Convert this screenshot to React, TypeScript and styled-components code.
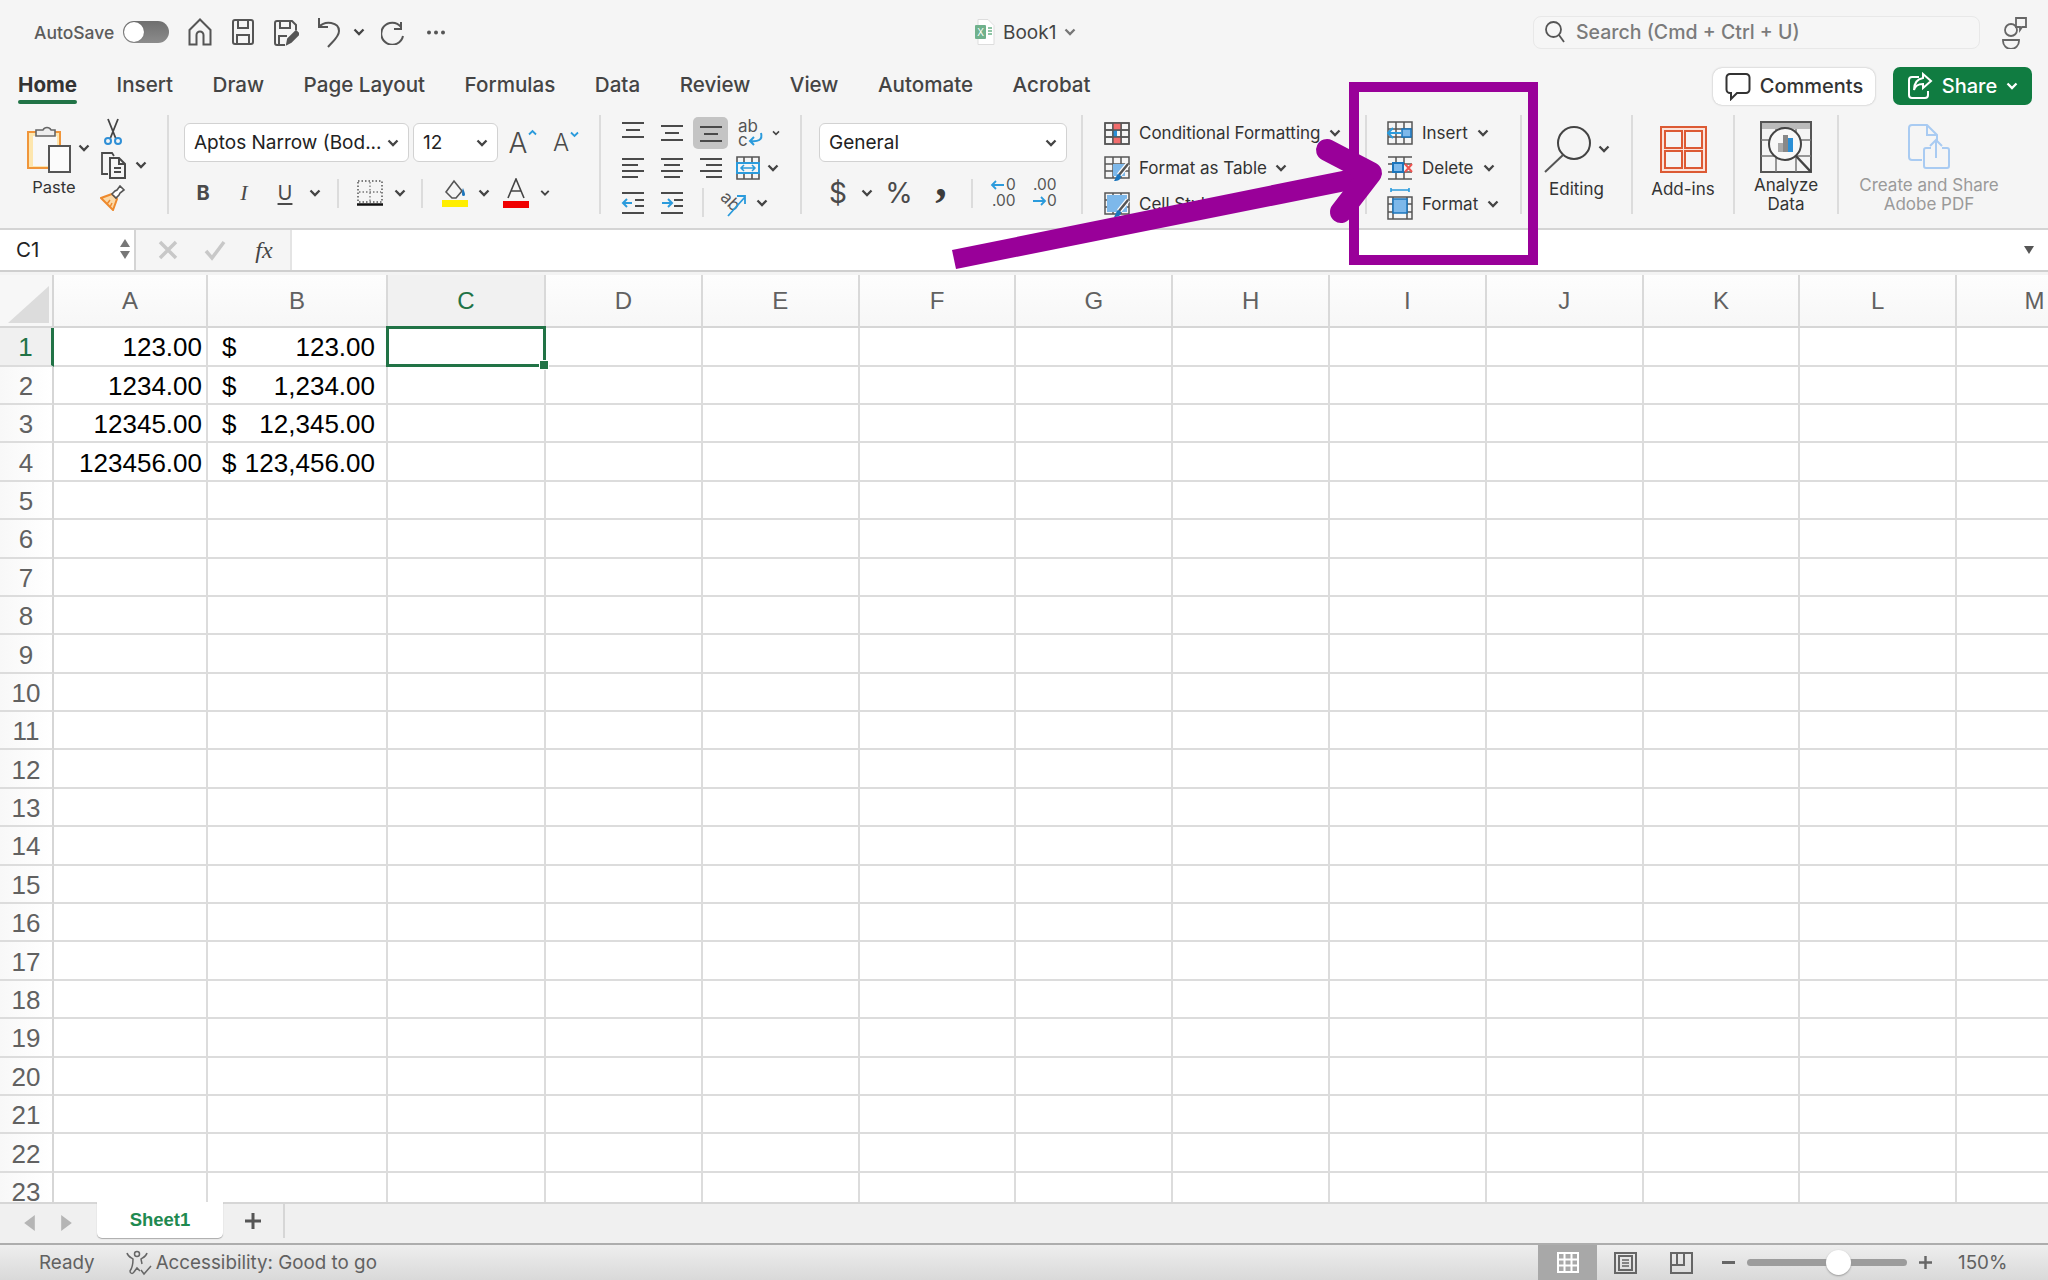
import React from "react";
import styled, { createGlobalStyle } from "styled-components";

const Global = createGlobalStyle`
  html, body { margin: 0; padding: 0; background: #f5f5f5; }
  * { box-sizing: border-box; }
`;

const UI = `Inter, "Liberation Sans", sans-serif`;
const SHEET = `"Liberation Sans", Arial, sans-serif`;
const INK = "#4a4a4a";
const GREEN = "#217346";

const Page = styled.div`
  position: relative; width: 2048px; height: 1280px; overflow: hidden;
  display: flex; flex-direction: column; background: #f5f5f5; font-family: ${UI}; color: #333;
`;

/* ---------- title bar ---------- */
const TitleBar = styled.header`
  height: 64px; flex: none; display: flex; align-items: center;
`;
const QuickAccess = styled.div`
  width: 975px; flex: none; padding-left: 34px; display: flex; align-items: center;
`;
const AutoSave = styled.span`
  width: 81px; font-size: 17.5px; font-weight: 500; color: #5c5c5c; white-space: nowrap;
`;
const Toggle = styled.span`
  position: relative; width: 46px; height: 22px; margin: 0 8px; border-radius: 11px; flex: none;
  background: linear-gradient(#6f6f6f, #8c8c8c);
  &::before {
    content: ""; position: absolute; left: 1px; top: 1px; width: 20px; height: 20px;
    border-radius: 50%; background: #fff; box-shadow: 0 0 1px #555;
  }
`;
const Slot = styled.span<{ $w: number }>`
  width: ${p => p.$w}px; flex: none; display: flex; align-items: center; justify-content: center;
`;
const DocName = styled.div`
  width: 120px; flex: none; display: flex; align-items: center; gap: 8px;
  font-size: 19px; color: #444;
`;
const SearchBox = styled.div`
  margin-left: 438px; width: 447px; height: 33px; flex: none; display: flex; align-items: center;
  padding-left: 11px; gap: 11px; border: 1px solid #e8e8e8; border-radius: 8px; background: #f6f6f6;
  font-size: 19.5px; font-weight: 500; color: #7b7b7b;
`;
const PeopleSlot = styled.span`
  margin-left: 22px; display: flex;
`;

/* ---------- tabs ---------- */
const TabRow = styled.nav`
  height: 46px; flex: none; display: flex; align-items: flex-start; padding: 0 16px 0 18px;
`;
const TabList = styled.div`
  display: flex; gap: 39.5px; height: 40px; align-items: center;
`;
const Tab = styled.span<{ $on?: boolean }>`
  position: relative; font-size: 20.6px; white-space: nowrap;
  font-weight: ${p => (p.$on ? 700 : 500)}; color: ${p => (p.$on ? "#333" : "#444")};
  &::after {
    content: ""; display: ${p => (p.$on ? "block" : "none")}; position: absolute;
    left: 0; right: 0; bottom: -7px; height: 4px; border-radius: 2px; background: ${GREEN};
  }
`;
const TabActions = styled.div`
  margin-left: auto; display: flex; gap: 18px; align-items: center; padding-top: 3px;
`;
const CommentsBtn = styled.span`
  width: 162px; height: 37px; display: flex; align-items: center; justify-content: center; gap: 9px;
  background: #fff; border-radius: 9px; box-shadow: 0 0 2px #aaa;
  font-size: 20px; font-weight: 500; color: #333;
`;
const ShareBtn = styled.span`
  width: 139px; height: 38px; display: flex; align-items: center; justify-content: center; gap: 9px;
  background: #107c41; border-radius: 7px; color: #fff; font-size: 20px; font-weight: 500;
`;

/* ---------- ribbon ---------- */
const Ribbon = styled.section`
  height: 118px; flex: none; display: flex; padding-top: 5px; align-items: flex-start;
`;
const Group = styled.div<{ $w: number; $pad?: number; $end?: boolean }>`
  width: ${p => p.$w}px; height: 99px; flex: none; padding-left: ${p => p.$pad || 0}px;
  border-right: ${p => (p.$end ? "0" : "2px solid #dcdcdc")};
`;
const RowGroup = styled(Group)`
  display: flex;
`;
const PasteCol = styled.div`
  width: 80px; flex: none; display: flex; flex-direction: column; padding-top: 3px;
`;
const PasteIcons = styled.div`
  height: 60px; padding-left: 13px; display: flex; gap: 7px; align-items: center;
`;
const PasteLabel = styled.span`
  text-align: center; font-size: 16.5px; line-height: 19px; color: #333;
`;
const Stack = styled.div`
  display: flex; flex-direction: column;
`;
const SlotRow = styled.div`
  height: 35px; display: flex; align-items: center;
`;
const FieldsCol = styled.div`
  padding-top: 8px; display: flex; flex-direction: column; gap: 11px;
`;
const FieldRow = styled.div`
  display: flex; align-items: center; gap: 4px; height: 39px;
`;
const Select = styled.div<{ $w: number }>`
  width: ${p => p.$w}px; height: 39px; flex: none; display: flex; align-items: center;
  justify-content: space-between; padding: 0 9px; background: #fff;
  border: 1.5px solid #d2d2d2; border-radius: 6px; font-size: 19px; color: #222; white-space: nowrap;
`;
const ToolRow = styled.div`
  display: flex; align-items: center; height: 40px;
`;
const ToolGlyph = styled.span<{ $bold?: boolean; $italic?: boolean; $under?: boolean; $size?: number }>`
  font-family: ${p => (p.$italic ? `"Liberation Serif", serif` : UI)};
  font-size: ${p => p.$size || 20}px; color: ${INK}; line-height: 1;
  font-weight: ${p => (p.$bold ? 700 : 400)};
  font-style: ${p => (p.$italic ? "italic" : "normal")};
  text-decoration: ${p => (p.$under ? "underline" : "none")};
  text-underline-offset: 3px;
`;
const GrowGlyph = styled(ToolGlyph)`
  display: flex; align-items: flex-start; font-weight: 300; gap: 1px;
`;
const CommaGlyph = styled.span`
  font-family: "Liberation Serif", serif; font-weight: 700; font-size: 46px; line-height: 1;
  color: #3c3c3c; transform: translateY(-12px);
`;
const Rule = styled.span`
  width: 2px; height: 29px; background: #dcdcdc;
`;
const ActiveTile = styled.span`
  width: 35px; height: 32px; display: flex; align-items: center; justify-content: center;
  border-radius: 5px; background: #c4c4c4;
`;
const CmdRow = styled.div`
  height: 35.5px; display: flex; align-items: center; font-size: 17px; color: #333; white-space: nowrap;
`;
const CmdIcon = styled.span`
  width: 26px; margin-right: 9px; display: flex; justify-content: center; flex: none;
`;
const CmdChev = styled.span<{ $gap: number }>`
  margin-left: ${p => p.$gap}px; display: flex;
`;
const Big = styled(Group)`
  display: flex; flex-direction: column; align-items: center; padding-top: 3px;
`;
const BigIcon = styled.div`
  height: 62px; display: flex; align-items: center; gap: 7px;
`;
const BigLabel = styled.span<{ $muted?: boolean }>`
  font-size: 17px; line-height: 19px; text-align: center; white-space: nowrap;
  color: ${p => (p.$muted ? "#9a9a9a" : "#333")};
`;

/* ---------- formula bar ---------- */
const FormulaBar = styled.div`
  height: 44px; flex: none; display: flex; border-top: 2px solid #d4d4d4; border-bottom: 2px solid #cfcfcf;
`;
const NameBox = styled.div`
  width: 136px; flex: none; background: #fff; border-right: 2px solid #d4d4d4; display: flex;
  align-items: center; justify-content: space-between; padding: 0 4px 2px 16px;
  font-size: 20.5px; color: #222;
`;
const Spin = styled.span`
  display: flex; flex-direction: column; gap: 4px;
`;
const FormulaTools = styled.div`
  width: 154px; flex: none; display: flex; align-items: center; padding-left: 12px;
`;
const FxText = styled.span`
  font-family: "Liberation Serif", serif; font-style: italic; font-size: 24px; color: #444;
`;
const FormulaInput = styled.div`
  flex: 1; background: #fff; border-left: 2px solid #e4e4e4; display: flex; justify-content: flex-end;
  align-items: center; padding-right: 14px;
`;
const Gap = styled.div`
  height: 3px; flex: none; background: #f3f3f3;
`;

/* ---------- sheet ---------- */
const SheetArea = styled.main`
  flex: 1; min-height: 0; overflow: hidden; background: #fff;
  display: grid; align-content: start;
  grid-template-columns: 54px 154px 180px 158px repeat(10, 156.8px);
  grid-template-rows: 53.2px repeat(23, 38.4px);
  font-family: ${SHEET};
`;
const Corner = styled.div`
  position: relative; background: #f7f7f7; border-right: 2px solid #d6d6d6; border-bottom: 2px solid #d6d6d6;
  &::after {
    content: ""; position: absolute; right: 3px; bottom: 3px; width: 0; height: 0;
    border-style: solid; border-width: 0 0 37px 41px; border-color: transparent transparent #dcdcdc transparent;
  }
`;
const ColHead = styled.div<{ $on?: boolean }>`
  display: flex; align-items: center; justify-content: center; font-size: 24px;
  color: ${p => (p.$on ? GREEN : "#616161")};
  background: ${p => (p.$on ? "#f1f1f1" : "linear-gradient(#fdfdfd, #f7f7f7)")};
  border-right: 2px solid #d9d9d9; border-bottom: 2px solid #d6d6d6;
`;
const RowHead = styled.div<{ $on?: boolean }>`
  display: flex; align-items: center; justify-content: center; font-size: 26px; padding-top: 3px;
  color: ${p => (p.$on ? GREEN : "#616161")};
  background: ${p => (p.$on ? "#f0f0f0" : "linear-gradient(90deg, #f8f8f8, #fff)")};
  border-right: ${p => (p.$on ? `3px solid ${GREEN}` : "2px solid #d6d6d6")};
  border-bottom: 2px solid #dcdcdc;
`;
const Cell = styled.div`
  position: relative; display: flex; align-items: center; justify-content: flex-end;
  gap: 4px; padding: 3px 4px 0 4px; font-size: 26px; color: #000; white-space: nowrap;
  border-right: 2px solid #dcdcdc; border-bottom: 2px solid #dcdcdc;
`;
const Accounting = styled(Cell)`
  justify-content: space-between; padding: 3px 11px 0 14px;
`;
const Selection = styled.span`
  position: absolute; z-index: 2; left: -2px; right: -2px; top: -2px; bottom: -2px; border: 3px solid ${GREEN};
  &::after {
    content: ""; position: absolute; right: -5px; bottom: -5px; width: 8px; height: 8px;
    background: ${GREEN}; box-shadow: 0 0 0 1px #fff;
  }
`;

/* ---------- sheet tabs + status ---------- */
const SheetTabs = styled.div`
  height: 41px; flex: none; display: flex; align-items: flex-start;
  border-top: 2px solid #d6d6d6; background: #f0f0f0;
`;
const NavArrows = styled.div`
  width: 97px; height: 37px; flex: none; display: flex; align-items: center; padding-left: 23px; gap: 24px;
`;
const SheetTab = styled.div`
  width: 126px; height: 36px; margin-top: -2px; flex: none; display: flex; align-items: center; justify-content: center;
  background: #fff; border-radius: 0 0 5px 5px; box-shadow: 0 1px 1px #aaa;
  font-family: ${SHEET}; font-size: 18.5px; font-weight: 700; color: #1f8a50;
`;
const AddTab = styled.div`
  width: 62px; height: 34px; flex: none; display: flex; align-items: center; justify-content: center;
  border-right: 2px solid #d6d6d6;
`;
const StatusBar = styled.footer`
  height: 37px; flex: none; display: flex; align-items: center; padding-left: 39px;
  border-top: 2px solid #adadad; background: linear-gradient(#eeeeee, #d9d9d9);
  font-family: ${UI}; font-size: 18.8px; color: #616161;
`;
const StatusText = styled.span`
  white-space: nowrap;
`;
const AccessSlot = styled.span`
  margin: 0 4px 0 31px; display: flex;
`;
const ViewActive = styled.span`
  margin-left: auto; width: 59px; height: 35px; flex: none; display: flex; align-items: center; justify-content: center;
  background: #a8a8a8;
`;
const ZoomTrack = styled.span`
  position: relative; width: 160px; height: 7px; border-radius: 4px; background: #9c9c9c; flex: none;
  &::after {
    content: ""; position: absolute; left: 79px; top: -9px; width: 25px; height: 25px; border-radius: 50%;
    background: #fff; box-shadow: 0 1px 2px #999;
  }
`;
const ZoomPct = styled.span`
  width: 105px; padding-left: 15px; flex: none;
`;

/* ---------- annotation ---------- */
const MarkBox = styled.div`
  position: absolute; left: 1349px; top: 82px; width: 189px; height: 183px; border: 10px solid #990099;
`;
const MarkArrow = styled.svg`
  position: absolute; left: 0; top: 0; pointer-events: none;
`;

/* ---------- icons ---------- */
type S = { children: React.ReactNode; w: number; h: number };
const Svg = ({ children, w, h }: S) => (
  <svg width={w} height={h} viewBox={`0 0 ${w} ${h}`} fill="none" stroke={INK} strokeWidth={1.8}>
    {children}
  </svg>
);
const Chev = ({ c = "#444", w = 12 }: { c?: string; w?: number }) => (
  <svg width={w} height={8} viewBox="0 0 12 8" fill="none" stroke={c} strokeWidth={2.3}>
    <path d="M1.5 1.5 6 6l4.5-4.5" />
  </svg>
);
const Caret = ({ up }: { up?: boolean }) => (
  <svg width={9} height={7} viewBox="0 0 9 7" fill="none" stroke="#2b9bdc" strokeWidth={1.8}>
    <path d={up ? "M1 5.500 4.500 2 8 5.500" : "M1 1.500 4.500 5 8 1.500"} />
  </svg>
);
const Home = () => (
  <Svg w={24} h={28}>
    <path d="M1.5 12 12 1.5 22.500 12v14.500h-7V17a3.500 3.500 0 0 0-7 0v9.500h-7z" strokeWidth={2} stroke="#555" />
  </Svg>
);
const Save = () => (
  <Svg w={24} h={28}>
    <path d="M4 2h16a2 2 0 0 1 2 2v20a2 2 0 0 1-2 2H4a2 2 0 0 1-2-2V4a2 2 0 0 1 2-2zM7 2v8h10V2M6 26v-9h12v9" strokeWidth={2} stroke="#555" />
  </Svg>
);
const SaveAs = () => (
  <Svg w={26} h={29}>
    <path d="M12 27H4a2 2 0 0 1-2-2V5a2 2 0 0 1 2-2h15l4 4v5M7 3v7h10V3M6 27v-9h8" strokeWidth={2} stroke="#555" />
    <path d="m14 26 1-5 8-8 3 3-8 8z" fill="#555" stroke="#555" />
  </Svg>
);
const Undo = () => (
  <Svg w={24} h={34}>
    <path d="M2 3v9h9M2 12c6-7 20-5 20 4 0 6-6 10-11 16" strokeWidth={2} stroke="#555" />
  </Svg>
);
const Redo = () => (
  <Svg w={24} h={26}>
    <path d="M20 3v7h-7M20 8A11 11 0 1 0 22 17" strokeWidth={2} stroke="#555" />
  </Svg>
);
const Dots = () => (
  <svg width={20} height={5}><g fill="#555"><circle cx="3" cy="2.500" r="2" /><circle cx="10" cy="2.500" r="2" /><circle cx="17" cy="2.500" r="2" /></g></svg>
);
const XlDoc = () => (
  <svg width={20} height={26} viewBox="0 0 20 26">
    <path d="M3 .5h10l6 6v19H3z" fill="#fff" stroke="#ddd" />
    <rect x="0" y="6" width="11" height="14" rx="1" fill="#6fb18c" />
    <text x="5.500" y="16.500" fontSize="10" textAnchor="middle" fill="#fff" fontFamily={SHEET}>X</text>
    <path d="M13 9h4M13 12h4M13 15h4" stroke="#8fc5a5" strokeWidth="2" />
  </svg>
);
const SearchIcon = () => (
  <Svg w={20} h={22}>
    <circle cx="8.500" cy="8.500" r="7.500" stroke="#555" />
    <path d="m14 14 5 7" stroke="#555" />
  </Svg>
);
const People = () => (
  <Svg w={26} h={34}>
    <circle cx="9" cy="15" r="6" stroke="#666" />
    <path d="M1 25h16v1a8 8 0 0 1-16 0zM14 3h10v9h-4l-2 3v-3h-4z" stroke="#666" />
  </Svg>
);
const Bubble = () => (
  <Svg w={26} h={29}>
    <path d="M5 2h16a3.500 3.500 0 0 1 3.500 3.500v12A3.500 3.500 0 0 1 21 21H12l-6 6v-6H5a3.500 3.500 0 0 1-3.500-3.500v-12A3.500 3.500 0 0 1 5 2z" stroke="#333" strokeWidth={2} />
  </Svg>
);
const ShareIcon = () => (
  <Svg w={26} h={28}>
    <path d="M12 5H5a3 3 0 0 0-3 3v15a3 3 0 0 0 3 3h13a3 3 0 0 0 3-3v-4" stroke="#fff" strokeWidth={2} />
    <path d="M16 2l8 7-8 7v-4c-5 0-8 2-9 6 0-7 3-11 9-12z" stroke="#fff" strokeWidth={2} />
  </Svg>
);
const PasteIcon = () => (
  <svg width={44} height={49} viewBox="0 0 44 49" fill="none">
    <rect x="1" y="8" width="32" height="36" fill="#fde6ae" stroke="#f0953a" strokeWidth="2" />
    <rect x="6" y="12" width="24" height="30" fill="#f8f8f8" />
    <path d="M9 12V6h7a4.500 4.500 0 0 1 8 0h4v6z" fill="#eee" stroke="#666" strokeWidth="1.600" />
    <rect x="22" y="22" width="21" height="26" fill="#fbfbfb" stroke="#555" strokeWidth="2" />
  </svg>
);
const Scissors = () => (
  <svg width={18} height={28} viewBox="0 0 18 28" fill="none">
    <path d="M4 1l8 20M14 1 6 21" stroke="#444" strokeWidth="1.800" />
    <circle cx="4" cy="23" r="3" stroke="#2f8fd6" strokeWidth="2" />
    <circle cx="14" cy="23" r="3" stroke="#2f8fd6" strokeWidth="2" />
  </svg>
);
const CopyIcon = () => (
  <Svg w={26} h={28}>
    <path d="M8 23H2V2h10l2 3" strokeWidth={1.800} />
    <path d="M10 7h9l6 6v14H10zM19 7v6h6M14 17h7M14 21h7" strokeWidth={2} />
  </Svg>
);
const Brush = () => (
  <svg width={26} height={26} viewBox="0 0 26 26" fill="none">
    <path d="M1 13l11-4 5 5-4 11z" fill="#fbd9a8" stroke="#ee8a2e" strokeWidth="2" />
    <path d="M7 19l3-4M10 22l2-4" stroke="#ee8a2e" strokeWidth="1.500" />
    <path d="M12 9l3-3 2-1 3-4 4 4-4 3-1 2-3 3z" fill="#fff" stroke="#555" strokeWidth="1.600" />
  </svg>
);
const Borders = () => (
  <svg width={26} height={26} viewBox="0 0 26 26" fill="none">
    <rect x="1" y="1" width="24" height="21" stroke="#555" strokeWidth="1.500" strokeDasharray="1.500 2" />
    <path d="M13 2v20M2 12h22" stroke="#777" strokeWidth="1.300" strokeDasharray="1.500 2" />
    <path d="M0 24.500h26" stroke="#111" strokeWidth="2.500" />
  </svg>
);
const Fill = () => (
  <svg width={26} height={28} viewBox="0 0 26 28" fill="none">
    <path d="M4 13 12 2l8 10-6 7h-4z" stroke="#555" strokeWidth="1.600" />
    <path d="M21 9c1 3 2 5 2 6.500a1.500 1.500 0 0 1-3 0c0-1.500 0-4 1-6.500z" fill="#1b75bc" />
    <rect y="21" width="26" height="7" fill="#ffee00" />
  </svg>
);
const FontColor = () => (
  <svg width={26} height={30} viewBox="0 0 26 30" fill="none">
    <path d="M5 20 13 1l8 19M8 13h10" stroke="#444" strokeWidth="1.600" />
    <rect y="23" width="26" height="7" fill="#f00000" />
  </svg>
);
const Lines = ({ rows }: { rows: [number, number, number][] }) => (
  <Svg w={24} h={26}>
    {rows.map(([a, b, y], i) => <path key={i} d={`M${a} ${y}H${b}`} strokeWidth={2} />)}
  </Svg>
);
const Indent = ({ flip }: { flip?: boolean }) => (
  <Svg w={24} h={26}>
    <path d="M1 3h22M14 10h9M14 16h9M1 23h22" strokeWidth={2} />
    {flip
      ? <path d="M2 13h9M8 9l4 4-4 4" stroke="#2b9bdc" strokeWidth={2} />
      : <path d="M11 13H2M6 9l-4 4 4 4" stroke="#2b9bdc" strokeWidth={2} />}
  </Svg>
);
const WrapIcon = () => (
  <svg width={28} height={36} viewBox="0 0 28 36" fill="none">
    <text x="1" y="17" fontFamily={UI} fontSize="17" fill="#555">ab</text>
    <text x="1" y="31" fontFamily={UI} fontSize="17" fill="#555">c</text>
    <path d="M24 18c2 7-3 9-11 8M17 22l-4 4 4 4" stroke="#2b9bdc" strokeWidth="2" />
  </svg>
);
const MergeIcon = () => (
  <svg width={24} height={24} viewBox="0 0 24 24" fill="none">
    <path d="M1 1h22v22H1zM8 1v6M16 1v6M8 17v6M16 17v6" stroke="#555" strokeWidth="1.600" />
    <rect x="1" y="7" width="22" height="10" fill="#f5f5f5" stroke="#2b9bdc" strokeWidth="2" />
    <path d="M5 12h14M8 9l-3 3 3 3M16 9l3 3-3 3" stroke="#2b9bdc" strokeWidth="1.500" />
  </svg>
);
const Orient = () => (
  <svg width={28} height={28} viewBox="0 0 28 28" fill="none">
    <text x="0" y="16" fontFamily={UI} fontSize="17" fill="#555" transform="rotate(45 8 12)">ab</text>
    <path d="M8 27 25 8M17 7h8v8" stroke="#2b9bdc" strokeWidth="1.800" />
  </svg>
);
const DecMore = ({ less }: { less?: boolean }) => (
  <svg width={32} height={34} viewBox="0 0 32 34" fill="none">
    <text x={less ? 4 : 18} y="14" fontFamily={UI} fontSize="15.500" fill="#555">{less ? ".00" : "0"}</text>
    <text x={less ? 18 : 4} y="30" fontFamily={UI} fontSize="15.500" fill="#555">{less ? "0" : ".00"}</text>
    {less
      ? <path d="M4 25h12M12 21l4 4-4 4" stroke="#2b9bdc" strokeWidth="1.800" />
      : <path d="M16 9H4M8 5 4 9l4 4" stroke="#2b9bdc" strokeWidth="1.800" />}
  </svg>
);
const GridBase = () => <path d="M1 3h24v21H1zM1 10h24M1 17h24M9 3v21M17 3v21" stroke="#555" strokeWidth="1.500" />;
const CondIcon = () => (
  <svg width={26} height={26} viewBox="0 0 26 26" fill="none">
    <GridBase />
    <rect x="9" y="3" width="8" height="7" fill="#f26d6d" />
    <rect x="9" y="17" width="8" height="7" fill="#f26d6d" />
    <rect x="9" y="10" width="4" height="7" fill="#2b8fd6" />
    <path d="M1 3h24v21H1zM1 10h24M1 17h24M9 3v21M17 3v21" stroke="#555" strokeWidth="1.300" />
  </svg>
);
const TableBrush = ({ big }: { big?: boolean }) => (
  <svg width={26} height={28} viewBox="0 0 26 28" fill="none">
    <GridBase />
    <rect x={big ? 3 : 9} y={big ? 5 : 10} width={big ? 20 : 12} height={big ? 17 : 12} fill="#7db8ea" />
    <path d="M24 10 15 21" stroke="#fff" strokeWidth="5" />
    <path d="M24 10 15 21" stroke="#555" strokeWidth="2.500" />
    <path d="M15 20c-3 1-3 4-5 7 4 0 7-1 7-5z" fill="#1b75bc" />
  </svg>
);
const InsertIcon = () => (
  <svg width={26} height={24} viewBox="0 0 26 24" fill="none">
    <path d="M1 1h24v22H1zM1 8h24M1 16h24M9 1v22M17 1v22" stroke="#555" strokeWidth="1.500" />
    <rect x="15" y="8" width="9" height="8" fill="#7db8ea" stroke="#1b75bc" strokeWidth="1.500" />
    <path d="M14 12H2M6 7l-5 5 5 5" stroke="#2b9bdc" strokeWidth="2" />
  </svg>
);
const DeleteIcon = () => (
  <svg width={26} height={24} viewBox="0 0 26 24" fill="none">
    <path d="M1 1h24M1 23h24M1 8h24M1 16h24M9 1v22M17 1v7M17 16v7" stroke="#555" strokeWidth="1.500" />
    <rect x="6" y="7" width="10" height="9" fill="#7db8ea" stroke="#1b75bc" strokeWidth="2" />
    <path d="m18 8 7 8M25 8l-7 8" stroke="#f0534f" strokeWidth="2" />
  </svg>
);
const FormatIcon = () => (
  <svg width={26} height={32} viewBox="0 0 26 32" fill="none">
    <path d="M4 2h18M4 0v4M22 0v4" stroke="#2b9bdc" strokeWidth="1.600" />
    <path d="M1 9h24v22H1zM1 16h24M1 24h24M6 9v22M20 9v22" stroke="#555" strokeWidth="1.500" />
    <rect x="6" y="11" width="14" height="14" fill="#7db8ea" stroke="#1b75bc" strokeWidth="1.500" />
  </svg>
);
const Magnifier = () => (
  <Svg w={47} h={47}>
    <circle cx="30" cy="17" r="16" strokeWidth={2} stroke="#444" />
    <path d="M19 29 1 46" strokeWidth={2} stroke="#555" />
  </Svg>
);
const AddIns = () => (
  <svg width={47} height={47} viewBox="0 0 47 47" fill="none" stroke="#dc5a34" strokeWidth="2">
    <rect x="1" y="1" width="45" height="45" fill="#fbe3da" />
    <rect x="5" y="5" width="17" height="17" fill="#f5f5f5" />
    <rect x="25" y="5" width="17" height="17" fill="#f5f5f5" />
    <rect x="5" y="25" width="17" height="17" fill="#f5f5f5" />
    <rect x="25" y="25" width="17" height="17" fill="#f5f5f5" />
  </svg>
);
const Analyze = () => (
  <svg width={52} height={52} viewBox="0 0 52 52" fill="none">
    <path d="M1 1h50v50H1z" stroke="#555" strokeWidth="2" />
    <rect x="2" y="2" width="48" height="6" fill="#bbb" />
    <path d="M1 19h50M1 35h50M16 8v43M36 8v43" stroke="#777" strokeWidth="1.500" />
    <circle cx="25" cy="23" r="16" fill="#f8f8f8" stroke="#444" strokeWidth="2" />
    <rect x="18" y="22" width="5" height="9" fill="#aaa" />
    <rect x="23" y="14" width="5" height="17" fill="#888" />
    <rect x="28" y="17" width="5" height="14" fill="#2b8fd6" />
    <path d="m36 35 15 16" stroke="#444" strokeWidth="2.500" />
  </svg>
);
const PdfShare = () => (
  <svg width={42} height={46} viewBox="0 0 42 46" fill="none" stroke="#a9cbf2" strokeWidth="2">
    <path d="M14 36H4a3 3 0 0 1-3-3V4a3 3 0 0 1 3-3h15l10 10v7M19 1v10h10" />
    <path d="M23 24h-5a2 2 0 0 0-2 2v16a2 2 0 0 0 2 2h21a2 2 0 0 0 2-2V26a2 2 0 0 0-2-2h-5M28 34V16M22 22l6-6 6 6" />
  </svg>
);
const FXMark = ({ check }: { check?: boolean }) => (
  <svg width={22} height={22} viewBox="0 0 22 22" fill="none" stroke="#c8c8c8" strokeWidth="3.500">
    {check ? <path d="M2 12l6 7L20 3" /> : <path d="m3 3 16 16M19 3 3 19" />}
  </svg>
);
const Tri = ({ dir, c, s = 8 }: { dir: "up" | "down" | "left" | "right"; c: string; s?: number }) => {
  const d = { up: "M0 8 5 0l5 8z", down: "M0 0l5 8 5-8z", left: "M8 0v12L0 6z", right: "M0 0v12l8-6z" }[dir];
  const horiz = dir === "left" || dir === "right";
  return (
    <svg width={horiz ? s + 4 : s + 2} height={horiz ? s + 7 : s} viewBox={horiz ? "0 0 8 12" : "0 0 10 8"}>
      <path d={d} fill={c} />
    </svg>
  );
};
const Plus = ({ s = 16, c = "#555", t = 3 }: { s?: number; c?: string; t?: number }) => (
  <svg width={s} height={s} viewBox="0 0 16 16" stroke={c} strokeWidth={t}><path d="M8 0v16M0 8h16" /></svg>
);
const Access = () => (
  <svg width={26} height={26} viewBox="0 0 26 26" fill="none" stroke="#666" strokeWidth="1.500">
    <circle cx="11" cy="4" r="2.500" />
    <path d="M1 3c1 4 5 5 6 6 0 4 0 8-3 12 0 3 3 3 4 1l3-4 3 3M21 3c-1 4-5 5-6 6l1 5" />
    <path d="m15 20 3 4 7-8" />
  </svg>
);
const ViewGrid = () => (
  <svg width={22} height={21} viewBox="0 0 22 21">
    <path d="M1 1h20v19H1zM1 7.500h20M1 13.500h20M7.500 1v19M14.500 1v19" fill="#a8a8a8" stroke="#fff" strokeWidth="2" />
  </svg>
);
const ViewPage = () => (
  <Svg w={23} h={22}>
    <rect x="1" y="1" width="21" height="20" stroke="#666" strokeWidth={2} />
    <rect x="5" y="4" width="13" height="14" stroke="#666" strokeWidth={2} />
    <path d="M8 8h7M8 11h7M8 14h7" stroke="#666" strokeWidth={1.500} />
  </Svg>
);
const ViewBreak = () => (
  <Svg w={23} h={22}>
    <path d="M1 1h21v20H1zM1 13h13V1M7 1v12" stroke="#666" strokeWidth={2} />
  </Svg>
);

/* ---------- data ---------- */
const COLS = ["A", "B", "C", "D", "E", "F", "G", "H", "I", "J", "K", "L", "M"];
const DATA: [string, string][] = [
  ["123.00", "123.00"], ["1234.00", "1,234.00"], ["12345.00", "12,345.00"], ["123456.00", "123,456.00"],
];
const TABS = ["Home", "Insert", "Draw", "Page Layout", "Formulas", "Data", "Review", "View", "Automate", "Acrobat"];
const ROWS = Array.from({ length: 23 }, (_, i) => i + 1);

export default function App() {
  return (
    <Page>
      <Global />
      <TitleBar>
        <QuickAccess>
          <AutoSave>AutoSave</AutoSave>
          <Toggle />
          <Slot $w={46}><Home /></Slot>
          <Slot $w={40}><Save /></Slot>
          <Slot $w={46}><SaveAs /></Slot>
          <Slot $w={40}><Undo /></Slot>
          <Slot $w={20}><Chev /></Slot>
          <Slot $w={48}><Redo /></Slot>
          <Slot $w={38}><Dots /></Slot>
        </QuickAccess>
        <DocName><XlDoc />Book1<Chev c="#777" /></DocName>
        <SearchBox><SearchIcon />Search (Cmd + Ctrl + U)</SearchBox>
        <PeopleSlot><People /></PeopleSlot>
      </TitleBar>

      <TabRow>
        <TabList>{TABS.map((t, i) => <Tab key={t} $on={i === 0}>{t}</Tab>)}</TabList>
        <TabActions>
          <CommentsBtn><Bubble />Comments</CommentsBtn>
          <ShareBtn><ShareIcon />Share<Chev c="#fff" /></ShareBtn>
        </TabActions>
      </TabRow>

      <Ribbon>
        <RowGroup $w={169} $pad={14}>
          <PasteCol>
            <PasteIcons><PasteIcon /><Chev /></PasteIcons>
            <PasteLabel>Paste</PasteLabel>
          </PasteCol>
          <Stack>
            <SlotRow><Slot $w={38}><Scissors /></Slot></SlotRow>
            <SlotRow><Slot $w={38}><CopyIcon /></Slot><Slot $w={18}><Chev /></Slot></SlotRow>
            <SlotRow><Slot $w={38}><Brush /></Slot></SlotRow>
          </Stack>
        </RowGroup>

        <Group $w={432} $pad={15}>
          <FieldsCol>
            <FieldRow>
              <Select $w={225}>Aptos Narrow (Bod...<Chev /></Select>
              <Select $w={85}>12<Chev /></Select>
              <Slot $w={42}><GrowGlyph $size={28}>A<Caret up /></GrowGlyph></Slot>
              <Slot $w={36}><GrowGlyph $size={24}>A<Caret /></GrowGlyph></Slot>
            </FieldRow>
            <ToolRow>
              <Slot $w={38}><ToolGlyph $bold>B</ToolGlyph></Slot>
              <Slot $w={44}><ToolGlyph $italic $size={22}>I</ToolGlyph></Slot>
              <Slot $w={38}><ToolGlyph $under>U</ToolGlyph></Slot>
              <Slot $w={22}><Chev /></Slot>
              <Slot $w={24}><Rule /></Slot>
              <Slot $w={40}><Borders /></Slot>
              <Slot $w={20}><Chev /></Slot>
              <Slot $w={24}><Rule /></Slot>
              <Slot $w={42}><Fill /></Slot>
              <Slot $w={16}><Chev /></Slot>
              <Slot $w={48}><FontColor /></Slot>
              <Slot $w={10}><Chev /></Slot>
            </ToolRow>
          </FieldsCol>
        </Group>

        <Group $w={201} $pad={13}>
          <SlotRow>
            <Slot $w={38}><Lines rows={[[1, 23, 3], [5, 19, 10], [1, 23, 17]]} /></Slot>
            <Slot $w={39}><Lines rows={[[1, 23, 6], [5, 19, 13], [1, 23, 20]]} /></Slot>
            <Slot $w={39}><ActiveTile><Lines rows={[[1, 23, 7], [5, 19, 14], [1, 23, 21]]} /></ActiveTile></Slot>
            <Slot $w={42}><WrapIcon /></Slot>
            <Slot $w={8}><Chev /></Slot>
          </SlotRow>
          <SlotRow>
            <Slot $w={38}><Lines rows={[[1, 23, 4], [1, 17, 10], [1, 23, 16], [1, 17, 22]]} /></Slot>
            <Slot $w={39}><Lines rows={[[1, 23, 4], [4, 20, 10], [1, 23, 16], [4, 20, 22]]} /></Slot>
            <Slot $w={39}><Lines rows={[[1, 23, 4], [7, 23, 10], [1, 23, 16], [7, 23, 22]]} /></Slot>
            <Slot $w={36}><MergeIcon /></Slot>
            <Slot $w={14}><Chev /></Slot>
          </SlotRow>
          <SlotRow>
            <Slot $w={38}><Indent /></Slot>
            <Slot $w={39}><Indent flip /></Slot>
            <Slot $w={24}><Rule /></Slot>
            <Slot $w={38}><Orient /></Slot>
            <Slot $w={18}><Chev /></Slot>
          </SlotRow>
        </Group>

        <Group $w={281} $pad={17}>
          <FieldsCol>
            <FieldRow><Select $w={248}>General<Chev /></Select></FieldRow>
            <ToolRow>
              <Slot $w={38}><ToolGlyph $size={28}>$</ToolGlyph></Slot>
              <Slot $w={20}><Chev /></Slot>
              <Slot $w={44}><ToolGlyph $size={28}>%</ToolGlyph></Slot>
              <Slot $w={40}><CommaGlyph>,</CommaGlyph></Slot>
              <Slot $w={22}><Rule /></Slot>
              <Slot $w={42}><DecMore /></Slot>
              <Slot $w={40}><DecMore less /></Slot>
            </ToolRow>
          </FieldsCol>
        </Group>

        <Group $w={284} $pad={21}>
          <CmdRow><CmdIcon><CondIcon /></CmdIcon>Conditional Formatting<CmdChev $gap={8}><Chev /></CmdChev></CmdRow>
          <CmdRow><CmdIcon><TableBrush /></CmdIcon>Format as Table<CmdChev $gap={8}><Chev /></CmdChev></CmdRow>
          <CmdRow><CmdIcon><TableBrush big /></CmdIcon>Cell Styles</CmdRow>
        </Group>

        <Group $w={155} $pad={20}>
          <CmdRow><CmdIcon><InsertIcon /></CmdIcon>Insert<CmdChev $gap={9}><Chev /></CmdChev></CmdRow>
          <CmdRow><CmdIcon><DeleteIcon /></CmdIcon>Delete<CmdChev $gap={9}><Chev /></CmdChev></CmdRow>
          <CmdRow><CmdIcon><FormatIcon /></CmdIcon>Format<CmdChev $gap={9}><Chev /></CmdChev></CmdRow>
        </Group>

        <Big $w={111}>
          <BigIcon><Magnifier /><Chev /></BigIcon>
          <BigLabel>Editing</BigLabel>
        </Big>
        <Big $w={102}>
          <BigIcon><AddIns /></BigIcon>
          <BigLabel>Add-ins</BigLabel>
        </Big>
        <Big $w={104}>
          <BigIcon><Analyze /></BigIcon>
          <BigLabel>Analyze<br />Data</BigLabel>
        </Big>
        <Big $w={180} $end>
          <BigIcon><PdfShare /></BigIcon>
          <BigLabel $muted>Create and Share<br />Adobe PDF</BigLabel>
        </Big>
      </Ribbon>

      <FormulaBar>
        <NameBox>C1<Spin><Tri dir="up" c="#777" /><Tri dir="down" c="#777" /></Spin></NameBox>
        <FormulaTools>
          <Slot $w={40}><FXMark /></Slot>
          <Slot $w={54}><FXMark check /></Slot>
          <Slot $w={44}><FxText>fx</FxText></Slot>
        </FormulaTools>
        <FormulaInput><Tri dir="down" c="#555" /></FormulaInput>
      </FormulaBar>
      <Gap />

      <SheetArea>
        <Corner />
        {COLS.map((c, i) => <ColHead key={c} $on={i === 2}>{c}</ColHead>)}
        {ROWS.map(r => (
          <React.Fragment key={r}>
            <RowHead $on={r === 1}>{r}</RowHead>
            {COLS.map((c, i) => {
              const row = DATA[r - 1];
              if (row && i === 0) return <Cell key={c}>{row[0]}</Cell>;
              if (row && i === 1) return <Accounting key={c}><span>$</span><span>{row[1]}</span></Accounting>;
              return <Cell key={c}>{r === 1 && i === 2 ? <Selection /> : null}</Cell>;
            })}
          </React.Fragment>
        ))}
      </SheetArea>

      <SheetTabs>
        <NavArrows><Tri dir="left" c="#b5b5b5" s={9} /><Tri dir="right" c="#b5b5b5" s={9} /></NavArrows>
        <SheetTab>Sheet1</SheetTab>
        <AddTab><Plus /></AddTab>
      </SheetTabs>

      <StatusBar>
        <StatusText>Ready</StatusText>
        <AccessSlot><Access /></AccessSlot>
        <StatusText>Accessibility: Good to go</StatusText>
        <ViewActive><ViewGrid /></ViewActive>
        <Slot $w={56}><ViewPage /></Slot>
        <Slot $w={56}><ViewBreak /></Slot>
        <Slot $w={38}><svg width={13} height={4}><rect width="13" height="3" fill="#666" /></svg></Slot>
        <ZoomTrack />
        <Slot $w={36}><Plus s={13} c="#666" /></Slot>
        <ZoomPct>150%</ZoomPct>
      </StatusBar>

      <MarkBox />
      <MarkArrow width={2048} height={1280} viewBox="0 0 2048 1280">
        <path d="M952 250 1362 167 1366 187 956 269z" fill="#990099" />
        <path d="M1327 150 1371 173 1341 212" fill="none" stroke="#990099" strokeWidth="22" strokeLinecap="round" strokeLinejoin="round" />
      </MarkArrow>
    </Page>
  );
}
